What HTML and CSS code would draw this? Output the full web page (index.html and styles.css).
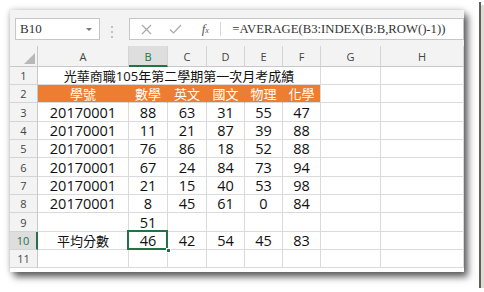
FILE: index.html
```html
<!DOCTYPE html>
<html lang="zh-Hant">
  <head>
    <meta charset="UTF-8" />
    <title>Excel AVERAGE</title>
    <link rel="stylesheet" href="styles.css">
  </head>
  <body>
    <div class="frame">
      <div class="window">
        <div class="toolbar">
          <div class="namebox">
            <span class="name">B10</span>
            <span class="arrow"></span>
          </div>
          <div class="dots"><i></i><i></i><i></i></div>
          <div class="formula">
            <span class="ico">
              <svg width="11" height="11" viewBox="0 0 11 11"><path d="M1 1L10 10M10 1L1 10" stroke="#a9a9a9" stroke-width="1.2" fill="none"/></svg>
            </span>
            <span class="ico">
              <svg width="13" height="10" viewBox="0 0 13 10"><path d="M1 5.5L4.5 9L12 1" stroke="#a9a9a9" stroke-width="1.2" fill="none"/></svg>
            </span>
            <span class="fx"><i>f</i><small>x</small></span>
            <span class="sep"></span>
            <span class="ftext">=AVERAGE(B3:INDEX(B:B,ROW()-1))</span>
          </div>
        </div>
        <div class="sheet">
          <div class="corner">
            <svg width="11" height="11" viewBox="0 0 11 11"><path d="M11 0V11H0Z" fill="#b8b8b8"/></svg>
          </div>
          <div class="ch">A</div>
          <div class="ch on">B</div>
          <div class="ch">C</div>
          <div class="ch">D</div>
          <div class="ch">E</div>
          <div class="ch">F</div>
          <div class="ch">G</div>
          <div class="ch">H</div>

          <div class="rh">1</div>
          <div class="c title"><span>光華商職105年第二學期第一次月考成績</span></div>
          <div class="c"></div><div class="c"></div>

          <div class="rh">2</div>
          <div class="c hd">學號</div>
          <div class="c hd">數學</div>
          <div class="c hd">英文</div>
          <div class="c hd">國文</div>
          <div class="c hd">物理</div>
          <div class="c hd last">化學</div>
          <div class="c"></div><div class="c"></div>

          <div class="rh">3</div>
          <div class="c">20170001</div><div class="c">88</div><div class="c">63</div><div class="c">31</div><div class="c">55</div><div class="c">47</div>
          <div class="c"></div><div class="c"></div>

          <div class="rh">4</div>
          <div class="c">20170001</div><div class="c">11</div><div class="c">21</div><div class="c">87</div><div class="c">39</div><div class="c">88</div>
          <div class="c"></div><div class="c"></div>

          <div class="rh">5</div>
          <div class="c">20170001</div><div class="c">76</div><div class="c">86</div><div class="c">18</div><div class="c">52</div><div class="c">88</div>
          <div class="c"></div><div class="c"></div>

          <div class="rh">6</div>
          <div class="c">20170001</div><div class="c">67</div><div class="c">24</div><div class="c">84</div><div class="c">73</div><div class="c">94</div>
          <div class="c"></div><div class="c"></div>

          <div class="rh">7</div>
          <div class="c">20170001</div><div class="c">21</div><div class="c">15</div><div class="c">40</div><div class="c">53</div><div class="c">98</div>
          <div class="c"></div><div class="c"></div>

          <div class="rh">8</div>
          <div class="c">20170001</div><div class="c">8</div><div class="c">45</div><div class="c">61</div><div class="c">0</div><div class="c">84</div>
          <div class="c"></div><div class="c"></div>

          <div class="rh">9</div>
          <div class="c"></div><div class="c">51</div><div class="c"></div><div class="c"></div><div class="c"></div><div class="c"></div>
          <div class="c"></div><div class="c"></div>

          <div class="rh on">10</div>
          <div class="c cjk">平均分數</div><div class="c sel">46</div><div class="c">42</div><div class="c">54</div><div class="c">45</div><div class="c">83</div>
          <div class="c"></div><div class="c"></div>

          <div class="rh">11</div>
          <div class="c"></div><div class="c"></div><div class="c"></div><div class="c"></div><div class="c"></div><div class="c"></div>
          <div class="c"></div><div class="c"></div>
        </div>
      </div>
    </div>
  </body>
</html>
```

FILE: styles.css
```css
body {
  margin: 0;
  background: #fff;
}
.frame {
  width: 479px;
  height: 288px;
  box-sizing: border-box;
  padding: 10px 0 0 10px;
  background: #fff;
  box-shadow: 2px 2px 0 #5f5f58, 5px 5px 0 #dcdcd4;
}
.window {
  width: 454px;
  height: 262px;
  background: #fff;
  overflow: hidden;
  box-shadow: 4px 5px 7px rgba(0, 0, 0, 0.6), 0 0 6px rgba(0, 0, 0, 0.22);
}

/* formula bar */
.toolbar {
  height: 36px;
  box-sizing: border-box;
  padding: 8px 0 0 5px;
  background: #f3f3f3;
  display: flex;
}
.namebox {
  width: 85px;
  height: 22px;
  box-sizing: border-box;
  border: 1px solid #c6c6c6;
  background: #fff;
  display: flex;
  align-items: center;
  justify-content: space-between;
  padding: 0 7px 0 4px;
}
.name,
.ftext {
  font-family: "Liberation Serif", serif;
  font-size: 13px;
  color: #333;
}
.ftext {
  font-size: 12.7px;
}
.arrow {
  width: 0;
  height: 0;
  border-left: 3px solid transparent;
  border-right: 3px solid transparent;
  border-top: 3px solid #777;
}
.dots {
  width: 25px;
  display: flex;
  flex-direction: column;
  align-items: center;
  justify-content: center;
  gap: 3px;
  padding-right: 5px;
}
.dots i {
  width: 2px;
  height: 2px;
  background: #c2c2c2;
}
.formula {
  width: 337px;
  height: 22px;
  box-sizing: border-box;
  border: 1px solid #c6c6c6;
  background: #fff;
  display: flex;
  align-items: center;
  padding-left: 2px;
}
.ico {
  width: 29px;
  display: flex;
  justify-content: center;
}
.fx {
  width: 30px;
  text-align: center;
  font-family: "Liberation Serif", serif;
  color: #555;
  font-size: 13px;
}
.fx small {
  font-size: 8px;
  font-style: italic;
}
.sep {
  width: 1px;
  height: 14px;
  background: #d6d6d6;
  margin-right: 11px;
}

/* grid */
.sheet {
  display: grid;
  grid-template-columns: 28px 91px 39px 39px 38px 38px 38px 60px 83px;
  grid-template-rows: 21px 18px 18px 19px 18px 18px 19px 18px 18px 19px 18px 18px;
  font-family: "Open Sans", "Noto Sans CJK TC", sans-serif;
}
.corner,
.ch,
.rh {
  background: #f3f3f3;
  box-sizing: border-box;
  font-size: 11px;
  color: #444;
  display: flex;
  align-items: center;
  justify-content: center;
}
.corner {
  align-items: flex-end;
  justify-content: flex-end;
  padding: 0 2px 2px 0;
  border-right: 1px solid #c8c8c8;
  border-bottom: 1px solid #c8c8c8;
}
.ch {
  border-right: 1px solid #d4d4d4;
  border-bottom: 1px solid #c8c8c8;
  padding-top: 1px;
}
.ch.on {
  background: #dedede;
  color: #217346;
  border-bottom: 2px solid #217346;
}
.rh {
  border-right: 1px solid #c8c8c8;
  border-bottom: 1px solid #d4d4d4;
}
.rh.on {
  background: #dedede;
  color: #217346;
  border-right: 2px solid #217346;
}
.c {
  box-sizing: border-box;
  border-right: 1px solid #dadada;
  border-bottom: 1px solid #dadada;
  display: flex;
  align-items: center;
  justify-content: center;
  font-size: 14.5px;
  color: #111;
  white-space: nowrap;
}
.title {
  grid-column: 2 / 8;
  font-size: 13px;
}
.cjk {
  font-size: 13px;
}
.hd {
  background: #ed7d31;
  border-right-color: #ed7d31;
  color: #fff;
  font-size: 13px;
}
.hd.last {
  border-right-color: #dadada;
}
.sel {
  position: relative;
}
.sel::after {
  content: "";
  position: absolute;
  left: -2px;
  top: -2px;
  right: -1px;
  bottom: -1px;
  border: 2px solid #217346;
}
.sel::before {
  content: "";
  position: absolute;
  right: -4px;
  bottom: -4px;
  width: 5px;
  height: 5px;
  background: #217346;
  border: 1px solid #fff;
  box-sizing: border-box;
  z-index: 1;
}
```
